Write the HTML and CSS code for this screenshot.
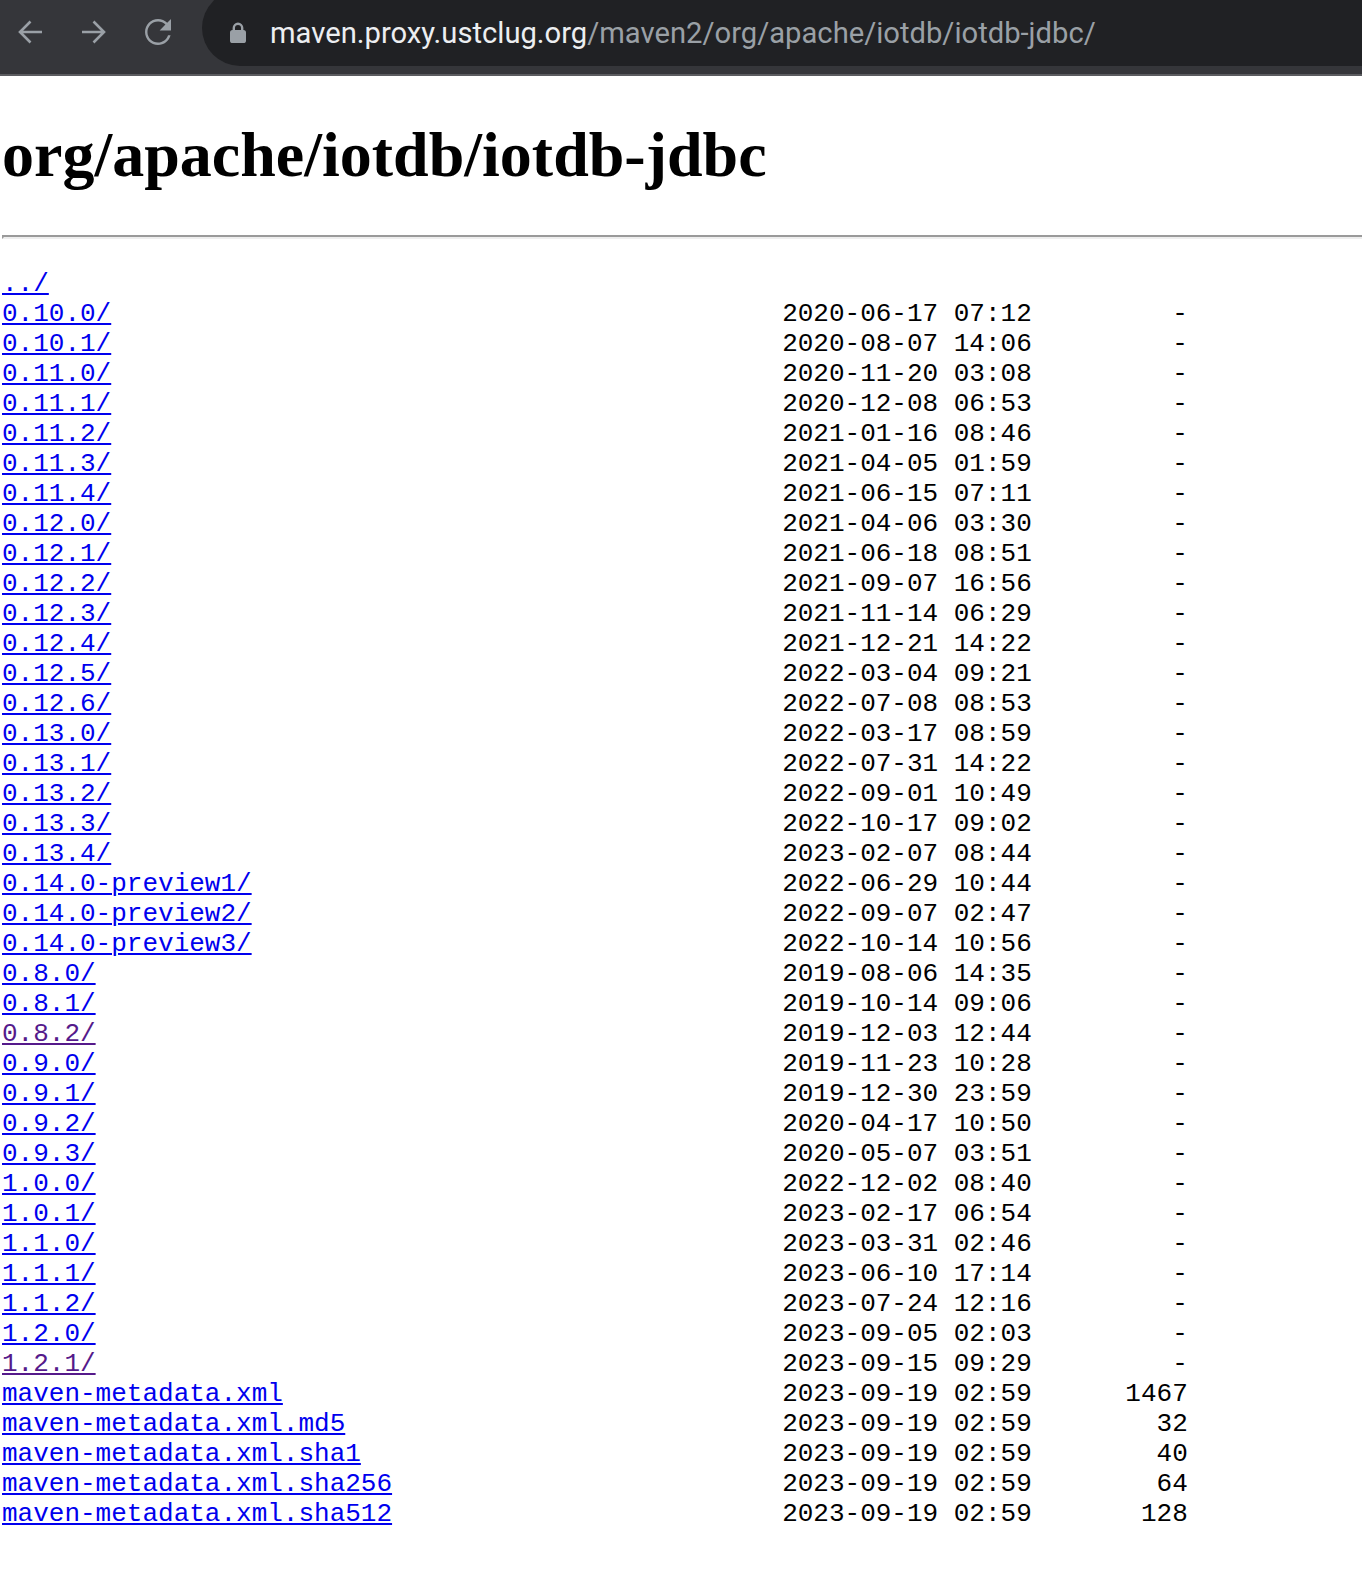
FILE: index.html
```html
<!DOCTYPE html>
<html>
<head>
<meta charset="utf-8">
<title>Index of /maven2/org/apache/iotdb/iotdb-jdbc/</title>
<link rel="stylesheet" href="styles.css">
</head>
<body>
<div class="toolbar">
  <div class="nav">
    <svg class="nav-icon" width="26" height="26" viewBox="0 0 26 26"><path d="M25 13H3M13.5 2.5L3 13l10.5 10.5" fill="none" stroke="#9aa0a6" stroke-width="2.6"/></svg>
    <svg class="nav-icon" width="26" height="26" viewBox="0 0 26 26"><path d="M1 13h22M12.5 2.5L23 13 12.5 23.5" fill="none" stroke="#9aa0a6" stroke-width="2.6"/></svg>
    <svg class="nav-icon" width="27" height="26" viewBox="4 4 16.6 16"><path fill="#9aa0a6" d="M17.65 6.35C16.2 4.9 14.21 4 12 4c-4.42 0-7.99 3.58-7.99 8s3.57 8 7.99 8c3.73 0 6.84-2.55 7.73-6h-1.55c-.86 2.6-3.3 4.5-6.18 4.5-3.6 0-6.5-2.9-6.5-6.5s2.9-6.5 6.5-6.5c1.8 0 3.4.73 4.57 1.93L13 11h7V4l-2.35 2.35z"/></svg>
  </div>
  <div class="omnibox">
    <svg class="lock" width="16" height="21" viewBox="0 0 16 21"><path d="M3.8 9V6a4.2 4.2 0 0 1 8.4 0v3" fill="none" stroke="#9aa0a6" stroke-width="2.4"/><rect x="0" y="8" width="16" height="13" rx="2.6" fill="#9aa0a6"/></svg>
    <span class="url"><span class="host">maven.proxy.ustclug.org</span><span class="path">/maven2/org/apache/iotdb/iotdb-jdbc/</span></span>
  </div>
</div>
<main class="page">
  <h1 class="title">org/apache/iotdb/iotdb-jdbc</h1>
  <hr class="rule">
  <div class="listing">
    <div class="entry"><a href="../">../</a></div>
    <div class="entry"><a href="0.10.0/">0.10.0/</a><span>2020-06-17 07:12</span><span class="size">-</span></div>
    <div class="entry"><a href="0.10.1/">0.10.1/</a><span>2020-08-07 14:06</span><span class="size">-</span></div>
    <div class="entry"><a href="0.11.0/">0.11.0/</a><span>2020-11-20 03:08</span><span class="size">-</span></div>
    <div class="entry"><a href="0.11.1/">0.11.1/</a><span>2020-12-08 06:53</span><span class="size">-</span></div>
    <div class="entry"><a href="0.11.2/">0.11.2/</a><span>2021-01-16 08:46</span><span class="size">-</span></div>
    <div class="entry"><a href="0.11.3/">0.11.3/</a><span>2021-04-05 01:59</span><span class="size">-</span></div>
    <div class="entry"><a href="0.11.4/">0.11.4/</a><span>2021-06-15 07:11</span><span class="size">-</span></div>
    <div class="entry"><a href="0.12.0/">0.12.0/</a><span>2021-04-06 03:30</span><span class="size">-</span></div>
    <div class="entry"><a href="0.12.1/">0.12.1/</a><span>2021-06-18 08:51</span><span class="size">-</span></div>
    <div class="entry"><a href="0.12.2/">0.12.2/</a><span>2021-09-07 16:56</span><span class="size">-</span></div>
    <div class="entry"><a href="0.12.3/">0.12.3/</a><span>2021-11-14 06:29</span><span class="size">-</span></div>
    <div class="entry"><a href="0.12.4/">0.12.4/</a><span>2021-12-21 14:22</span><span class="size">-</span></div>
    <div class="entry"><a href="0.12.5/">0.12.5/</a><span>2022-03-04 09:21</span><span class="size">-</span></div>
    <div class="entry"><a href="0.12.6/">0.12.6/</a><span>2022-07-08 08:53</span><span class="size">-</span></div>
    <div class="entry"><a href="0.13.0/">0.13.0/</a><span>2022-03-17 08:59</span><span class="size">-</span></div>
    <div class="entry"><a href="0.13.1/">0.13.1/</a><span>2022-07-31 14:22</span><span class="size">-</span></div>
    <div class="entry"><a href="0.13.2/">0.13.2/</a><span>2022-09-01 10:49</span><span class="size">-</span></div>
    <div class="entry"><a href="0.13.3/">0.13.3/</a><span>2022-10-17 09:02</span><span class="size">-</span></div>
    <div class="entry"><a href="0.13.4/">0.13.4/</a><span>2023-02-07 08:44</span><span class="size">-</span></div>
    <div class="entry"><a href="0.14.0-preview1/">0.14.0-preview1/</a><span>2022-06-29 10:44</span><span class="size">-</span></div>
    <div class="entry"><a href="0.14.0-preview2/">0.14.0-preview2/</a><span>2022-09-07 02:47</span><span class="size">-</span></div>
    <div class="entry"><a href="0.14.0-preview3/">0.14.0-preview3/</a><span>2022-10-14 10:56</span><span class="size">-</span></div>
    <div class="entry"><a href="0.8.0/">0.8.0/</a><span>2019-08-06 14:35</span><span class="size">-</span></div>
    <div class="entry"><a href="0.8.1/">0.8.1/</a><span>2019-10-14 09:06</span><span class="size">-</span></div>
    <div class="entry"><a class="visited" href="0.8.2/">0.8.2/</a><span>2019-12-03 12:44</span><span class="size">-</span></div>
    <div class="entry"><a href="0.9.0/">0.9.0/</a><span>2019-11-23 10:28</span><span class="size">-</span></div>
    <div class="entry"><a href="0.9.1/">0.9.1/</a><span>2019-12-30 23:59</span><span class="size">-</span></div>
    <div class="entry"><a href="0.9.2/">0.9.2/</a><span>2020-04-17 10:50</span><span class="size">-</span></div>
    <div class="entry"><a href="0.9.3/">0.9.3/</a><span>2020-05-07 03:51</span><span class="size">-</span></div>
    <div class="entry"><a href="1.0.0/">1.0.0/</a><span>2022-12-02 08:40</span><span class="size">-</span></div>
    <div class="entry"><a href="1.0.1/">1.0.1/</a><span>2023-02-17 06:54</span><span class="size">-</span></div>
    <div class="entry"><a href="1.1.0/">1.1.0/</a><span>2023-03-31 02:46</span><span class="size">-</span></div>
    <div class="entry"><a href="1.1.1/">1.1.1/</a><span>2023-06-10 17:14</span><span class="size">-</span></div>
    <div class="entry"><a href="1.1.2/">1.1.2/</a><span>2023-07-24 12:16</span><span class="size">-</span></div>
    <div class="entry"><a href="1.2.0/">1.2.0/</a><span>2023-09-05 02:03</span><span class="size">-</span></div>
    <div class="entry"><a class="visited" href="1.2.1/">1.2.1/</a><span>2023-09-15 09:29</span><span class="size">-</span></div>
    <div class="entry"><a href="maven-metadata.xml">maven-metadata.xml</a><span>2023-09-19 02:59</span><span class="size">1467</span></div>
    <div class="entry"><a href="maven-metadata.xml.md5">maven-metadata.xml.md5</a><span>2023-09-19 02:59</span><span class="size">32</span></div>
    <div class="entry"><a href="maven-metadata.xml.sha1">maven-metadata.xml.sha1</a><span>2023-09-19 02:59</span><span class="size">40</span></div>
    <div class="entry"><a href="maven-metadata.xml.sha256">maven-metadata.xml.sha256</a><span>2023-09-19 02:59</span><span class="size">64</span></div>
    <div class="entry"><a href="maven-metadata.xml.sha512">maven-metadata.xml.sha512</a><span>2023-09-19 02:59</span><span class="size">128</span></div>
  </div>
</main>
</body>
</html>
```
FILE: styles.css
```css
html, body {
  margin: 0;
  padding: 0;
  background: #ffffff;
}

body {
  font-family: "Liberation Serif", serif;
  color: #000000;
}

/* Browser chrome bar */
.toolbar {
  height: 73.5px;
  background: #35363a;
  border-bottom: 2px solid #5b5c60;
  display: flex;
  align-items: flex-start;
  overflow: hidden;
}

.nav {
  display: flex;
  align-items: center;
  gap: 38px;
  padding: 18px 0 0 17px;
  height: 27px;
}

.nav-icon {
  display: block;
  flex: none;
}

.omnibox {
  flex: 1;
  margin-top: -10px;
  margin-left: 30px;
  height: 76px;
  box-sizing: border-box;
  padding: 10px 0 0 28px;
  background: #202124;
  border-radius: 38px 0 0 38px;
  display: flex;
  align-items: center;
  gap: 24px;
}

.lock {
  display: block;
  flex: none;
  margin-top: -1px;
}

.url {
  font-family: Roboto, "Liberation Sans", sans-serif;
  font-size: 29.2px;
  line-height: 34px;
  white-space: nowrap;
  margin-top: -1px;
}

.host {
  color: #eceef1;
}

.path {
  color: #9aa0a6;
}

/* Page content */
.page {
  padding-left: 2px;
}

.title {
  font-family: "Liberation Serif", "Times New Roman", serif;
  font-weight: bold;
  font-size: 64px;
  margin: 42.9px 0;
}

.rule {
  height: 0;
  margin: 16px 0 0 0;
  border: 0;
  border-top: 2px solid #9a9a9a;
  border-bottom: 2px solid #eeeeee;
  border-left: 2px solid #9a9a9a;
}

.listing {
  margin-top: 30px;
  font-family: "Liberation Mono", "Courier New", monospace;
  font-size: 26px;
  line-height: 30px;
  color: #000000;
}

.entry {
  display: grid;
  grid-template-columns: 50ch 16ch 10ch;
  white-space: pre;
}

.entry a {
  color: #0000ee;
  text-decoration: underline;
  text-decoration-thickness: 2px;
  text-underline-offset: 2px;
  justify-self: start;
}

.entry a.visited {
  color: #551a8b;
}

.size {
  text-align: right;
}
```
